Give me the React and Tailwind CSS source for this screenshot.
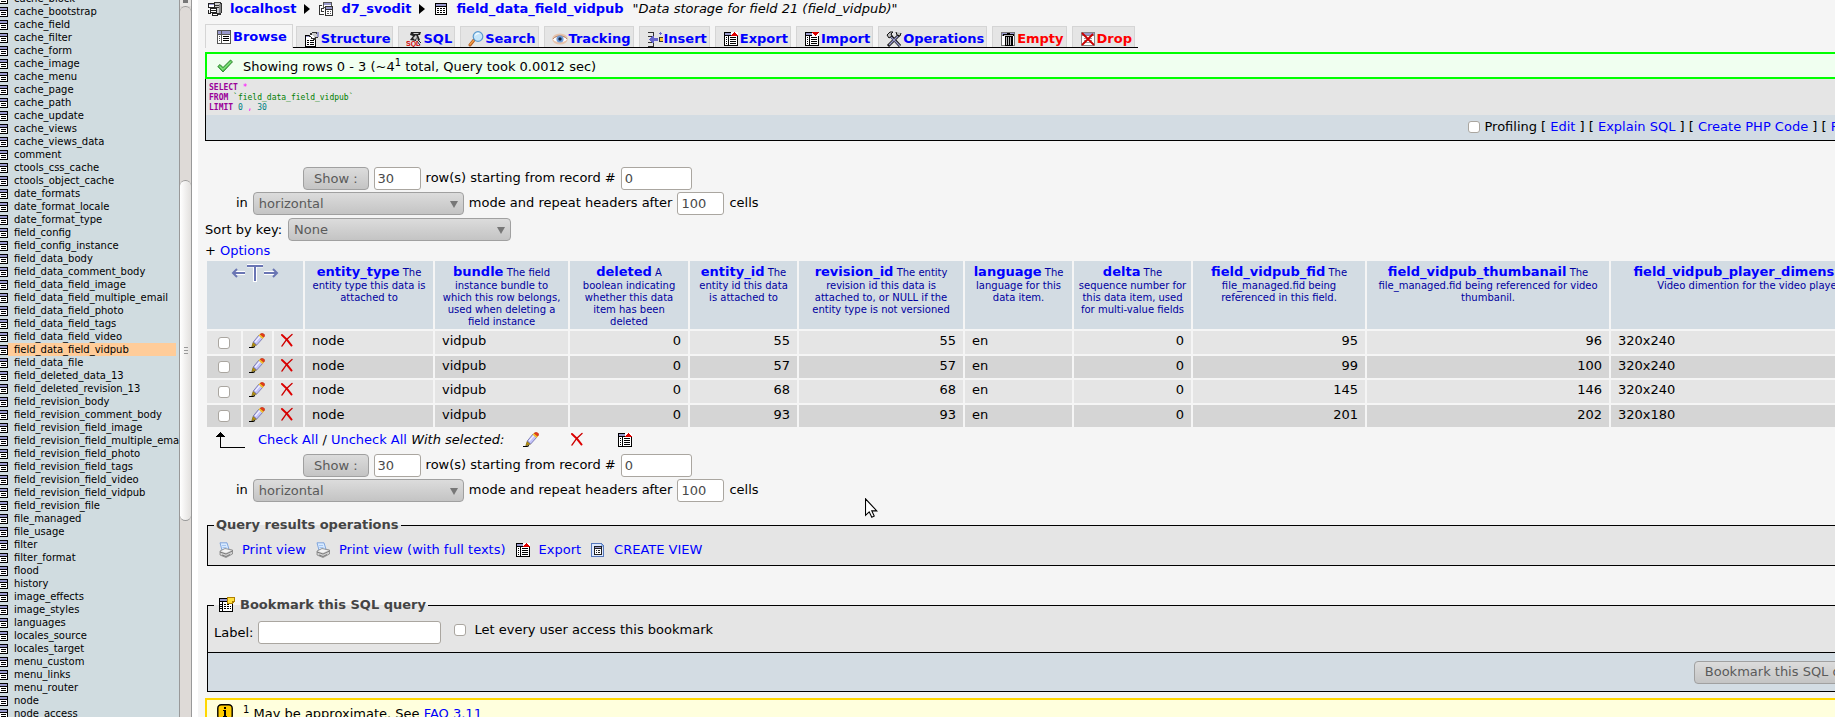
const tables = [
  "cache_block",
  "cache_bootstrap",
  "cache_field",
  "cache_filter",
  "cache_form",
  "cache_image",
  "cache_menu",
  "cache_page",
  "cache_path",
  "cache_update",
  "cache_views",
  "cache_views_data",
  "comment",
  "ctools_css_cache",
  "ctools_object_cache",
  "date_formats",
  "date_format_locale",
  "date_format_type",
  "field_config",
  "field_config_instance",
  "field_data_body",
  "field_data_comment_body",
  "field_data_field_image",
  "field_data_field_multiple_email",
  "field_data_field_photo",
  "field_data_field_tags",
  "field_data_field_video",
  "field_data_field_vidpub",
  "field_data_file",
  "field_deleted_data_13",
  "field_deleted_revision_13",
  "field_revision_body",
  "field_revision_comment_body",
  "field_revision_field_image",
  "field_revision_field_multiple_email",
  "field_revision_field_photo",
  "field_revision_field_tags",
  "field_revision_field_video",
  "field_revision_field_vidpub",
  "field_revision_file",
  "file_managed",
  "file_usage",
  "filter",
  "filter_format",
  "flood",
  "history",
  "image_effects",
  "image_styles",
  "languages",
  "locales_source",
  "locales_target",
  "menu_custom",
  "menu_links",
  "menu_router",
  "node",
  "node_access",
];

const currentTable = "field_data_field_vidpub";

function Icon({ children, smooth }) {
  return (
    <svg
      viewBox="0 0 16 16"
      shapeRendering={smooth ? "auto" : "crispEdges"}
      className="h-4 w-4 shrink-0"
      aria-hidden="true"
    >
      {children}
    </svg>
  );
}

function SmallTableIcon() {
  return (
    <svg viewBox="0 0 10 10" shapeRendering="crispEdges" className="h-[10px] w-[10px] shrink-0">
      <path fill="#000" d="M0 0h10v10H0z" />
      <path fill="#9999cc" d="M0 1h9v2H0z" />
      <path fill="#fff" d="M0 4h9v1H0zM0 6h9v1H0zM0 8h9v1H0z" />
      <path fill="#fff" d="M2 4h1v5H2zM8 4h1v5H8z" />
    </svg>
  );
}

function ServerIcon() {
  return (
    <Icon>
      <path fill="#333" d="M7 1h7v1h1v10h-1v2h-3v-1H7z" />
      <path fill="#ccc" d="M8 2h5v10H8z" />
      <path fill="#888" d="M12 3h2v9h-2z" />
      <path fill="#333" d="M8 4h4v1H8zM8 6h4v1H8z" />
      <path fill="#222" d="M1 2h7v5H1zM3 7h7v5H3zM5 12h6v3H5z" />
      <path fill="#9999cc" d="M2 3h5v1H2z" />
      <path fill="#fff" d="M2 4h5v2H2zM4 8h5v1H4zM4 10h5v1H4zM6 13h4v1H6z" />
      <path fill="#222" d="M1 9h1v4H1zM1 12h3v1H1z" />
    </Icon>
  );
}

function DatabaseIcon() {
  return (
    <Icon>
      <path fill="#555" d="M5 1h9v6H5z" />
      <path fill="#fff" d="M6 4h7v2H6z" />
      <path fill="#9999cc" d="M6 2h7v2H6z" />
      <path fill="#333" d="M7 5h8v10H7z" />
      <path fill="#9999cc" d="M8 6h6v2H8z" />
      <path fill="#fff" d="M8 9h6v5H8z" />
      <path fill="#555" d="M9 10h2v1H9zM12 10h1v1h-1zM9 12h2v1H9zM12 12h1v1h-1z" />
      <path fill="#333" d="M1 4h3v1H1zM1 4h1v10H1zM1 13h5v1H1zM3 7h3v1H3zM3 7h1v4H3zM3 10h3v1H3z" />
      <path fill="#fff" d="M2 5h2v2H2zM4 8h2v2H4zM2 11h4v2H2z" />
    </Icon>
  );
}

function TableIcon() {
  return (
    <Icon>
      <path fill="#000" d="M2 2h12v12H2z" />
      <path fill="#9999cc" d="M3 3h10v2H3z" />
      <path fill="#fff" d="M3 6h10v7H3z" />
      <path
        fill="#000"
        d="M4 7h2v1H4zM7 7h2v1H7zM10 7h2v1h-2zM4 9h2v1H4zM7 9h2v1H7zM10 9h2v1h-2zM4 11h2v1H4zM7 11h2v1H7zM10 11h2v1h-2z"
      />
    </Icon>
  );
}

function BrowseIcon() {
  return (
    <Icon>
      <path fill="#555" d="M1 1h14v14H1z" />
      <path fill="#fff" d="M2 2h12v12H2z" />
      <path fill="#9999cc" d="M2 2h12v3H2z" />
      <path fill="#555" d="M2 5h12v1H2zM5 2h1v12H5z" />
      <path fill="#000" d="M7 7h6v1H7zM7 9h6v1H7zM7 11h6v1H7z" />
      <path fill="#555" d="M3 7h1v1H3zM3 9h1v1H3zM3 11h1v1H3z" />
    </Icon>
  );
}

function StructureIcon() {
  return (
    <Icon>
      <path fill="#000" d="M1 4h11v12H1z" />
      <path fill="#fff" d="M2 6h9v9H2z" />
      <path fill="#9999cc" d="M2 5h5v1H2z" />
      <path fill="#000" d="M3 9h2v1H3zM6 9h4v1H6zM3 11h2v1H3zM6 11h4v1H6zM3 13h2v1H3zM6 13h4v1H6z" />
      <path fill="#333" d="M6 2h2V1h5v1h1v5h-2v2H9V8H7V6H5V4h1z" />
      <path fill="#ccc" d="M8 2h4v1h1v3h-2v1H9V6H8z" />
      <path fill="#fff" d="M6 4h3v1H6zM7 5h3v2H8V6H7z" />
      <path fill="#9999cc" d="M13 1h2v5h-2z" />
    </Icon>
  );
}

function SqlIcon() {
  return (
    <Icon smooth>
      <path fill="#222" d="M5 1h10l-1 3h-2l2 5-2 1-1-4-1 4-6-1 3-4-3-1z" />
      <path fill="#ccc" d="M7 2h6l-1 1H8zM7 7l3-3 1 2-2 3z" />
      <path stroke="#222" strokeWidth="1" d="M12 9l3 3M11 10l3 4" />
      <text x="0" y="15" fill="#d00000" fontSize="7" fontWeight="bold" fontFamily="Liberation Sans, sans-serif">
        SQL
      </text>
    </Icon>
  );
}

function SearchIcon() {
  return (
    <Icon smooth>
      <path stroke="#b35c1e" strokeWidth="3" strokeLinecap="round" d="M2 14l4-5" />
      <path stroke="#f5a04a" strokeWidth="1.200" strokeLinecap="round" d="M2 13.500l3.500-4" />
      <circle cx="10" cy="5.500" r="4.800" fill="#c6e6fa" stroke="#5b9bd0" strokeWidth="1.200" />
      <path fill="#f2fbff" d="M7 5a3 3 0 0 1 5-2.500C10 3 8 4 7 5z" />
    </Icon>
  );
}

function TrackingIcon() {
  return (
    <Icon smooth>
      <ellipse cx="8" cy="8" rx="7.800" ry="5.600" fill="#e6c3ac" />
      <path fill="#fff" d="M1 8.500C4 4.500 12 4.500 15 8.500 12 12 4 12 1 8.500z" />
      <path fill="none" stroke="#b98a70" d="M1 8C4 3.800 12 3.800 15 8" />
      <circle cx="8" cy="8" r="3.600" fill="#6f9bd8" />
      <circle cx="8" cy="8" r="1.700" fill="#15233f" />
    </Icon>
  );
}

function InsertIcon() {
  return (
    <Icon>
      <path fill="#333" d="M1 1h6v1H1zM6 1h1v4H6zM1 5h6v1H1zM1 11h6v1H1zM6 11h1v4H6zM1 15h6v1H1z" />
      <path fill="#6666cc" d="M2 8h1V7h1V6h1V5h2v2h4v3H7v2H5v-1H4v-1H3V9H2z" />
      <path fill="#333" d="M12 6h4v5h-4z" />
      <path fill="#ffcc33" d="M13 7h3v3h-3z" />
      <path fill="#6666cc" d="M12 2h3v1h-3zM13 1h1v3h-1z" />
    </Icon>
  );
}

function SheetBase() {
  return (
    <>
      <path fill="#000" d="M1 1h14v14H1z" />
      <path fill="#9999cc" d="M2 2h12v2H2z" />
      <path fill="#fff" d="M2 5h3v9H2zM6 5h8v9H6z" />
      <path
        fill="#000"
        d="M3 6h1v1H3zM3 8h1v1H3zM3 10h1v1H3zM3 12h1v1H3zM7 6h6v1H7zM7 8h6v1H7zM7 10h6v1H7zM7 12h6v1H7z"
      />
    </>
  );
}

function ExportIcon() {
  return (
    <Icon>
      <SheetBase />
      <path fill="#fff" d="M8 1h7v4H8z" />
      <path fill="#dd0000" d="M11 1h1v1h1v1h1v1h1v1H8V4h1V3h1V2h1z" />
    </Icon>
  );
}

function ImportIcon() {
  return (
    <Icon>
      <SheetBase />
      <path fill="#fff" d="M8 1h7v4H8z" />
      <path fill="#dd0000" d="M8 1h7v1h-1v1h-1v1h-1v1h-1V4h-1V3H9V2H8z" />
    </Icon>
  );
}

function OperationsIcon() {
  return (
    <Icon smooth>
      <path stroke="#111" strokeWidth="3" d="M3 3l11 12M13 4L2 15" />
      <path stroke="#9999cc" strokeWidth="1.400" d="M4 5l10 10M12 5L3 14" />
      <path fill="#bbb" stroke="#111" d="M1 4l3-3h3L5 3l1 2-3 2zM10 1l1 3 3 1 1-3" />
    </Icon>
  );
}

function EmptyIcon() {
  return (
    <Icon>
      <path fill="#777" d="M1 1h14v14H1z" />
      <path fill="#fff" d="M2 5h12v9H2z" />
      <path fill="#9999cc" d="M2 2h12v2H2z" />
      <path fill="#000" d="M7 2h3v1h4v2h-1v10H5V5H3V3h4z" />
      <path fill="#bbb" d="M6 6h1v8H6zM8 6h1v8H8zM10 6h1v8h-1zM4 4h9v1H4z" />
    </Icon>
  );
}

function DropIcon() {
  return (
    <Icon>
      <path fill="#888" d="M1 1h14v14H1z" />
      <path fill="#fff" d="M2 5h12v9H2z" />
      <path fill="#9999cc" d="M2 2h12v2H2z" />
      <path fill="#999" d="M4 7h8v1H4zM4 9h8v1H4zM4 11h8v1H4z" />
      <path stroke="#cc0000" strokeWidth="1.800" shapeRendering="auto" d="M2 2l12 12M13 3L2 14" />
    </Icon>
  );
}

function PencilIcon() {
  return (
    <Icon smooth>
      <path stroke="#000" strokeWidth="1.200" d="M0 14.500h4l2-1" fill="none" />
      <path fill="#b8900b" stroke="#6a5200" strokeWidth=".6" d="M2.800 13.800l1.400-4.600L7.500 12z" />
      <path fill="#c4c4fa" stroke="#6a6aa8" strokeWidth=".8" d="M4.300 9l5.700-7L14 5l-6.300 7z" />
      <path stroke="#f4f4ff" strokeWidth="1.200" d="M6.200 9.200l4.800-5.900" />
      <path fill="#f0c030" d="M9.500 2.500l1.600-1.800L15 4l-1.600 2z" />
      <path fill="#e83a18" stroke="#b02000" strokeWidth=".5" d="M11.200 1.200q1-1 2.600-.8 2.200.8 1.900 2.600L14.700 4.200z" />
    </Icon>
  );
}

function DeleteIcon() {
  return (
    <Icon smooth>
      <path fill="none" stroke="#dd0000" strokeWidth="2.100" strokeLinecap="round" d="M2 2Q7 6 11.500 12.500" />
      <path fill="none" stroke="#cc0000" strokeWidth="1.500" strokeLinecap="round" d="M12 1.500Q6 6 2 13" />
    </Icon>
  );
}

function CheckIcon() {
  return (
    <Icon smooth>
      <path
        fill="#4cc84c"
        stroke="#2d7a2d"
        strokeWidth=".9"
        strokeLinejoin="round"
        d="M.8 8.500L3 6.500l3 3L13.500 2l2 1.800L6 14z"
      />
      <path fill="none" stroke="#a6efa0" d="M2.500 8.300L6 11.500l8-8" />
    </Icon>
  );
}

function PrinterIcon() {
  return (
    <Icon smooth>
      <path fill="#d8eaff" stroke="#6a96d8" strokeWidth=".8" d="M2 .8h7l2 6.500-7 1z" />
      <path stroke="#8fb4ea" strokeWidth=".7" d="M4 3.500h4M4.500 5.500h4" />
      <path fill="#d0d0d0" stroke="#777" strokeWidth=".7" d="M2 9l5-2.500L14.500 8v4L8 15.500 2 13z" />
      <path fill="#f4f4f4" d="M3 9.200l4-2 6 1.300-5 2.300z" />
      <path fill="none" stroke="#666" strokeWidth=".8" d="M2 10l6 2 6.500-3M4 13l4 1.500 4-2" />
    </Icon>
  );
}

function ViewIcon() {
  return (
    <Icon>
      <path fill="#5577bb" d="M1 1h11v1h1v1h1v12H1z" />
      <path fill="#dce8ff" d="M2 2h9v3h2v9H2z" />
      <path fill="#8fb0e6" d="M11 2h1v1h1v2h-2z" />
      <path fill="#222" d="M4 4h8v9H4z" />
      <path fill="#9999cc" d="M5 5h6v1H5z" />
      <path fill="#fff" d="M5 7h6v5H5z" />
      <path fill="#222" d="M6 8h1v1H6zM8 8h2v1H8zM6 10h1v1H6zM8 10h2v1H8z" />
    </Icon>
  );
}

function BookmarkIcon() {
  return (
    <Icon>
      <path fill="#000" d="M0 1h14v14H0z" />
      <path fill="#9999cc" d="M1 2h12v2H1z" />
      <path fill="#fff" d="M1 5h2v9H1zM4 5h9v9H4z" />
      <path
        fill="#000"
        d="M5 7h2v1H5zM8 7h2v1H8zM5 9h2v1H5zM8 9h2v1H8zM11 9h1v1h-1zM5 11h2v1H5zM8 11h2v1H8zM11 11h1v1h-1zM1 7h2v1H1zM1 9h2v1H1zM1 11h2v1H1z"
      />
      <path fill="#b08000" d="M8 0h8v5h-1v1h-1v1H8z" />
      <path fill="#ffe040" d="M9 1h6v3h-2v2H9z" />
    </Icon>
  );
}

function InfoIcon() {
  return (
    <Icon smooth>
      <rect x=".8" y=".8" width="14.400" height="14.400" rx="3.500" fill="#ffcc00" stroke="#000" strokeWidth="1.400" />
      <path fill="#000" d="M7 3h2v2H7zM6 6h3v6h1v1H6v-1h1V7H6z" />
    </Icon>
  );
}

function Triangle() {
  return (
    <svg viewBox="0 0 6 10" className="mx-2 h-[10px] w-[6px] shrink-0">
      <path d="M0 0l6 5-6 5z" fill="#000" />
    </svg>
  );
}

function Link({ children, className = "" }) {
  return (
    <a href="#" className={`text-[#0000ff] ${className}`}>
      {children}
    </a>
  );
}

function Checkbox(props) {
  return (
    <input
      type="checkbox"
      className="h-3 w-3 shrink-0 appearance-none rounded-[3px] border border-[#aaa6a0] bg-white"
      {...props}
    />
  );
}

function TextInput({ className, ...props }) {
  return (
    <input
      type="text"
      className={`h-[23px] rounded-[3px] border border-[#aaa6a0] bg-white px-[3px] text-[13px] text-[#4a4a4a] ${className}`}
      {...props}
    />
  );
}

function Button({ children }) {
  return (
    <button
      type="button"
      className="h-[23px] rounded-[4px] border border-[#a0a0a0] bg-linear-to-b from-[#dcdcdc] to-[#c4c4c4] px-[10px] text-[#5a5a5a]"
    >
      {children}
    </button>
  );
}

function Select({ id, options, className }) {
  return (
    <span className={`relative inline-block ${className}`}>
      <select
        id={id}
        className="h-[23px] w-full appearance-none rounded-[4px] border border-[#a0a0a0] bg-linear-to-b from-[#dcdcdc] to-[#c4c4c4] px-[5px] text-[#5a5a5a]"
      >
        {options.map((o) => (
          <option key={o}>{o}</option>
        ))}
      </select>
      <svg viewBox="0 0 8 7" className="pointer-events-none absolute right-[6px] top-[9px] h-[7px] w-2">
        <path d="M0 0h8L4 7z" fill="#777" />
      </svg>
    </span>
  );
}

function Sidebar() {
  return (
    <div className="flex w-[198px] shrink-0 bg-white">
      <nav className="w-[179px] overflow-hidden bg-[#d0dce0]">
        <ul className="-ml-0.5 -mt-2">
          {tables.map((name) => (
            <li key={name} className="flex h-[13px] items-center pr-[3px]">
              <SmallTableIcon />
              <a
                href="#"
                className={`flex-1 whitespace-nowrap pl-[6px] text-[10px] leading-[13px] text-black ${
                  name === currentTable ? "bg-[#ffcc99]" : ""
                }`}
              >
                {name}
              </a>
            </li>
          ))}
        </ul>
      </nav>
      {/* Frame scrollbar */}
      <div className="flex w-[13px] flex-col border-x border-[#999] bg-[#dedad7]">
        <div className="h-[6px] shrink-0 bg-[#e8e6e4]">
          <svg viewBox="0 0 7 3" className="mx-auto h-[3px] w-[7px]">
            <path d="M1 0h5v3H1z" fill="#777" />
          </svg>
        </div>
        <div className="h-[174px] shrink-0 rounded-t-[6px] border-t border-[#999]" />
        <div className="flex h-[341px] shrink-0 flex-col items-center justify-center gap-[2px] rounded-[6px] border-y border-[#999] bg-linear-to-r from-white to-[#e2e0de]">
          <i className="h-px w-[4px] bg-[#999]" />
          <i className="h-px w-[4px] bg-[#999]" />
          <i className="h-px w-[4px] bg-[#999]" />
        </div>
      </div>
    </div>
  );
}

const tabs = [
  { name: "Structure", icon: <StructureIcon /> },
  { name: "SQL", icon: <SqlIcon /> },
  { name: "Search", icon: <SearchIcon /> },
  { name: "Tracking", icon: <TrackingIcon /> },
  { name: "Insert", icon: <InsertIcon /> },
  { name: "Export", icon: <ExportIcon /> },
  { name: "Import", icon: <ImportIcon /> },
  { name: "Operations", icon: <OperationsIcon /> },
  { name: "Empty", icon: <EmptyIcon />, danger: true },
  { name: "Drop", icon: <DropIcon />, danger: true },
];

function Tabs() {
  return (
    <div className="mt-[7px] flex h-6 items-stretch text-[13px] font-bold">
      <a
        href="#"
        className="flex items-center gap-px border border-b-0 border-[#d5d5d5] pl-[10px] pr-[5px] text-[#0000ff]"
      >
        <BrowseIcon />
        Browse
      </a>
      <div className="flex items-stretch gap-[5px] border-b border-black px-[3px] pt-[2px]">
        {tabs.map((tab) => (
          <a
            key={tab.name}
            href="#"
            className={`flex items-center gap-px border border-b-0 border-[#d5d5d5] bg-[#e5e5e5] pl-[7px] pr-[2px] pt-[3px] ${
              tab.danger ? "text-[#ff0000]" : "text-[#0000ff]"
            }`}
          >
            {tab.icon}
            {tab.name}
          </a>
        ))}
      </div>
    </div>
  );
}

function Navigation({ id }) {
  return (
    <form className="flex flex-col gap-[2px]">
      <div className="flex items-center pl-[98px]">
        <Button>Show :</Button>
        <TextInput id={`${id}-rows`} aria-label="Number of rows" defaultValue="30" className="ml-[5px] w-[47px]" />
        <label htmlFor={`${id}-start`} className="mx-[5px] pb-px">
          row(s) starting from record #
        </label>
        <TextInput id={`${id}-start`} defaultValue="0" className="w-[71px]" />
      </div>
      <div className="flex items-center pl-[31px]">
        <label htmlFor={`${id}-mode`} className="mr-[5px] pb-px">
          in
        </label>
        <Select id={`${id}-mode`} options={["horizontal", "vertical"]} className="w-[211px]" />
        <label htmlFor={`${id}-repeat`} className="mx-[5px] pb-px">
          mode and repeat headers after
        </label>
        <TextInput id={`${id}-repeat`} defaultValue="100" className="w-[47px]" />
        <span className="ml-[5px] pb-px">cells</span>
      </div>
    </form>
  );
}

const columns = [
  { name: "entity_type", comment: "The entity type this data is attached to", width: "w-[128px]" },
  {
    name: "bundle",
    comment: "The field instance bundle to which this row belongs, used when deleting a field instance",
    width: "w-[133px]",
  },
  {
    name: "deleted",
    comment: "A boolean indicating whether this data item has been deleted",
    width: "w-[118px]",
    numeric: true,
  },
  { name: "entity_id", comment: "The entity id this data is attached to", width: "w-[107px]", numeric: true },
  {
    name: "revision_id",
    comment: "The entity revision id this data is attached to, or NULL if the entity type is not versioned",
    width: "w-[164px]",
    numeric: true,
  },
  { name: "language", comment: "The language for this data item.", width: "w-[107px]" },
  {
    name: "delta",
    comment: "The\nsequence number for this data item, used for multi-value fields",
    width: "w-[117px]",
    padding: "px-[2px]",
    numeric: true,
  },
  {
    name: "field_vidpub_fid",
    comment: "The file_managed.fid being referenced in this field.",
    width: "w-[172px]",
    numeric: true,
  },
  {
    name: "field_vidpub_thumbanail",
    comment: "The file_managed.fid being referenced for video thumbanil.",
    width: "w-[242px]",
    numeric: true,
  },
  {
    name: "field_vidpub_player_dimensions",
    comment: "\nVideo dimention for the video player",
    width: "w-[276px]",
  },
];

const rows = [
  ["node", "vidpub", "0", "55", "55", "en", "0", "95", "96", "320x240"],
  ["node", "vidpub", "0", "57", "57", "en", "0", "99", "100", "320x240"],
  ["node", "vidpub", "0", "68", "68", "en", "0", "145", "146", "320x240"],
  ["node", "vidpub", "0", "93", "93", "en", "0", "201", "202", "320x180"],
];

function ResultsTable() {
  return (
    <table className="w-[1684px] table-fixed border-separate border-spacing-[2px]">
      <colgroup>
        <col className="w-[34px]" />
        <col className="w-[29px]" />
        <col className="w-[29px]" />
        {columns.map((col) => (
          <col key={col.name} className={col.width} />
        ))}
      </colgroup>
      <thead>
        <tr className="h-[68px] bg-[#d3dce3] align-top">
          <th colSpan={3}>
            <svg viewBox="0 0 48 18" className="mx-auto mt-[3px] h-[18px] w-12" aria-label="Full texts">
              <g stroke="#fff" strokeWidth="4" fill="none">
                <path d="M3 9h11M33 9h12M16 1.500h16M24 1.500V18" />
              </g>
              <g stroke="#6a76b4" strokeWidth="2" fill="none">
                <path d="M3 9h11M33 9h12M16 2h16M24 2v15" />
                <path d="M6 5L2 9l4 4M42 5l4 4-4 4" />
              </g>
            </svg>
          </th>
          {columns.map((col) => (
            <th
              key={col.name}
              className={`whitespace-pre-line pt-[3px] text-[10px] font-normal leading-[12px] text-[#0000a0] ${
                col.padding || "px-[6px]"
              }`}
            >
              <Link className="text-[13px] font-bold leading-[16px]">{col.name}</Link> {col.comment}
            </th>
          ))}
        </tr>
      </thead>
      <tbody>
        {rows.map((row, i) => (
          <tr key={row[3]} className="odd:h-[23px] odd:bg-[#e5e5e5] even:h-[22px] even:bg-[#d5d5d5]">
            <td>
              <div className="flex justify-center">
                <Checkbox aria-label={`Select row ${i + 1}`} />
              </div>
            </td>
            <td className="pb-[3px]">
              <a href="#" aria-label="Edit" className="flex pl-[6px]">
                <PencilIcon />
              </a>
            </td>
            <td className="pb-[3px]">
              <a href="#" aria-label="Delete" className="flex pl-[6px]">
                <DeleteIcon />
              </a>
            </td>
            {row.map((value, j) => (
              <td
                key={columns[j].name}
                className={`px-[7px] pb-[3px] leading-[16px] ${columns[j].numeric ? "text-right" : ""}`}
              >
                {value}
              </td>
            ))}
          </tr>
        ))}
      </tbody>
    </table>
  );
}

export default function App() {
  return (
    <div className="relative flex h-screen overflow-hidden bg-[#f5f5f5] font-['DejaVu_Sans',sans-serif] text-[13px] leading-[16px] text-black">
      <Sidebar />

      <main className="min-w-0 flex-1 overflow-hidden pl-[7px]">
        <div className="w-max min-w-full">
          {/* Breadcrumb */}
          <div className="flex h-[17px] items-center whitespace-nowrap pl-[2px]">
            <ServerIcon />
            <Link className="ml-[7px] font-bold">localhost</Link>
            <Triangle />
            <DatabaseIcon />
            <Link className="ml-[7px] font-bold">d7_svodit</Link>
            <Triangle />
            <TableIcon />
            <Link className="ml-[7px] font-bold">field_data_field_vidpub</Link>
            <i className="ml-[9px]">"Data storage for field 21 (field_vidpub)"</i>
          </div>

          <Tabs />

          {/* Query result message */}
          <div className="mt-1 flex h-[27px] items-center border-2 border-[#00ff00] bg-[#f0fff0] pl-[10px]">
            <CheckIcon />
            <p className="ml-[10px] pt-[2px]">
              Showing rows 0 - 3 (~4<sup className="text-[10px]">1</sup> total, Query took 0.0012 sec)
            </p>
          </div>
          <div className="border-b border-l border-black">
            <pre className="bg-[#e5e5e5] px-[3px] pb-[2px] pt-1 font-['DejaVu_Sans_Mono',monospace] text-[8px] leading-[10px] text-[#ff00ff]">
              <b className="text-[#990099]">SELECT</b> *{"\n"}
              <b className="text-[#990099]">FROM</b> <span className="text-[#008000]">`field_data_field_vidpub`</span>
              {"\n"}
              <b className="text-[#990099]">LIMIT</b> <span className="text-[#008080]">0</span> ,{" "}
              <span className="text-[#008080]">30</span>
            </pre>
            <div className="flex h-[25px] items-center justify-end gap-1 bg-[#d3dce3] pb-[2px]">
              <Checkbox id="profiling" />
              <label htmlFor="profiling">Profiling</label>
              <span>
                [ <Link>Edit</Link> ] [ <Link>Explain SQL</Link> ] [ <Link>Create PHP Code</Link> ] [{" "}
                <Link>Refresh</Link> ]
              </span>
            </div>
          </div>

          <div className="mt-[26px]">
            <Navigation id="top" />
          </div>
          <div className="mt-[3px] flex items-center">
            <label htmlFor="sort-key" className="mr-[6px]">
              Sort by key:
            </label>
            <Select id="sort-key" options={["None"]} className="w-[223px]" />
          </div>
          <p className="mt-[2px]">
            + <Link>Options</Link>
          </p>

          <ResultsTable />

          {/* Bulk actions */}
          <div className="flex h-[22px] items-center pl-[11px]">
            <svg viewBox="0 0 30 16" shapeRendering="crispEdges" className="h-4 w-[30px]">
              <path d="M4 2h1v13h24v1H4z" fill="#000" />
              <path d="M4 0h1l4 5H0z" fill="#000" />
            </svg>
            <span className="ml-[12px]">
              <Link>Check All</Link> / <Link>Uncheck All</Link> <i>With selected:</i>
            </span>
            <div className="ml-[19px] flex gap-[31px]">
              <a href="#" aria-label="Change">
                <PencilIcon />
              </a>
              <a href="#" aria-label="Delete selected">
                <DeleteIcon />
              </a>
              <a href="#" aria-label="Export selected">
                <ExportIcon />
              </a>
            </div>
          </div>
          <div className="mt-[3px]">
            <Navigation id="bottom" />
          </div>

          <fieldset className="ml-[2px] mt-[15px] border border-black bg-[#e5e5e5] px-[6px] pb-[7px]">
            <legend className="px-[2px] font-bold text-[#444]">Query results operations</legend>
            <div className="flex items-center gap-[9px] pl-1 pt-[9px]">
              <span className="flex gap-2">
                <PrinterIcon />
                <Link>Print view</Link>
              </span>
              <span className="flex gap-2">
                <PrinterIcon />
                <Link>Print view (with full texts)</Link>
              </span>
              <span className="flex gap-2">
                <ExportIcon />
                <Link>Export</Link>
              </span>
              <span className="flex gap-2">
                <ViewIcon />
                <Link>CREATE VIEW</Link>
              </span>
            </div>
          </fieldset>

          <form className="mt-[31px]">
            <fieldset className="ml-[2px] border border-black bg-[#e5e5e5] px-[6px]">
              <legend className="flex items-center gap-[5px] pl-[5px] pr-[2px] font-bold text-[#444]">
                <BookmarkIcon />
                Bookmark this SQL query
              </legend>
              <div className="flex items-center pb-[8px] pt-[8px]">
                <label htmlFor="bookmark-label" className="mr-[5px]">
                  Label:
                </label>
                <TextInput id="bookmark-label" className="w-[183px]" />
                <span className="ml-[13px] flex items-center gap-2 pb-[5px]">
                  <Checkbox id="bookmark-all" />
                  <label htmlFor="bookmark-all">Let every user access this bookmark</label>
                </span>
              </div>
            </fieldset>
            <div className="ml-[2px] flex h-[39px] items-center justify-end border border-t-0 border-black bg-[#d3dce3] pr-[7px]">
              <Button>Bookmark this SQL query</Button>
            </div>
          </form>

          {/* Footnote */}
          <div className="mt-[6px] flex items-start border-2 border-[#ffd700] bg-[#ffffdd] py-1 pl-[10px]">
            <InfoIcon />
            <p className="ml-[10px] pt-[2px]">
              <sup className="text-[10px]">1</sup> May be approximate. See <Link>FAQ 3.11</Link>
            </p>
          </div>
        </div>
      </main>

      {/* Mouse pointer */}
      <svg viewBox="0 0 13 20" className="pointer-events-none absolute left-[865px] top-[498px] h-5 w-[13px]">
        <path
          d="M.5 .8v16.500l3.700-3.500 2.600 5.400 2.400-1.100-2.400-5.200h5z"
          fill="#fff"
          stroke="#000"
          strokeWidth="1.100"
        />
      </svg>
    </div>
  );
}
